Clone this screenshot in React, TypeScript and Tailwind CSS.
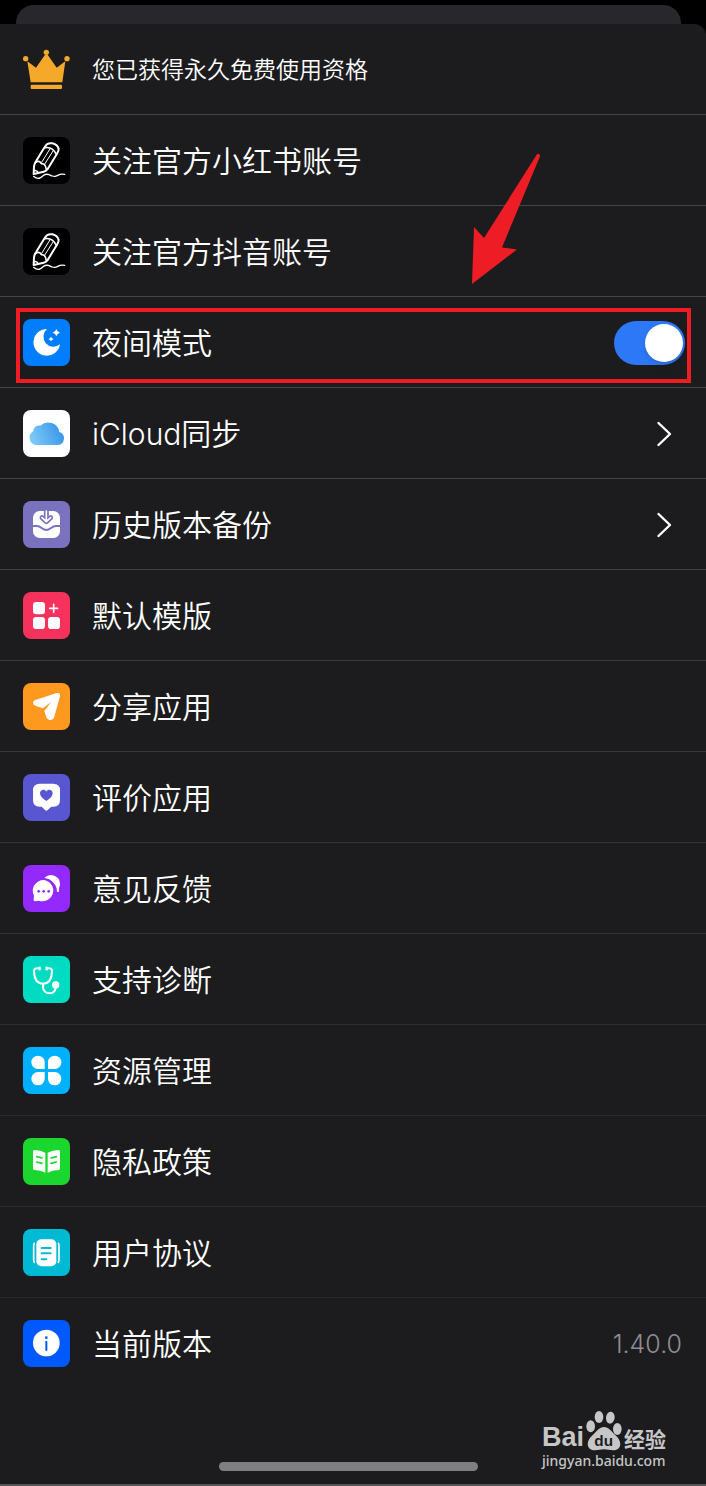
import { useState } from 'react';
import type { ReactNode } from 'react';

interface MenuItem {
  label: string;
  tile: string;
  divider: string;
  icon: ReactNode;
  chevron?: boolean;
}

const pencil = (
  <g fill="none" stroke="#fff" strokeLinecap="round" strokeLinejoin="round">
    <path strokeWidth="6" d="M32 111 L33 88 Q34 80 39 73 L65 30 Q73 16 88 19 Q104 23 107 36 Q107 42 102 50 L74 96 Q70 102 62 104 Z" />
    <path strokeWidth="5" d="M66 32 Q88 28 100 52" />
    <path strokeWidth="5" d="M37 77 Q48 68 55 80 Q67 78 70 98" />
    <path strokeWidth="3" d="M80 37 L56 76 M90 42 L66 80" />
    <path strokeWidth="4" d="M33 101 Q42 99 46 107" />
    <path strokeWidth="4" d="M32 118 C46 130 54 122 62 115 C72 107 80 114 88 117 C104 123 104 107 125 112" />
  </g>
);

const moon = (
  <g fill="#fff">
    <path d="M72 30 A40 40 0 1 0 111 76 A30 30 0 1 1 72 30 Z" />
    <path d="M100 30 Q102 39 111 41 Q102 43 100 52 Q98 43 89 41 Q98 39 100 30 Z" />
    <path d="M84 53 Q86 58 92 60 Q86 62 84 67 Q82 62 76 60 Q82 58 84 53 Z" />
  </g>
);

const cloud = (
  <>
    <defs>
      <linearGradient id="cloud" gradientUnits="userSpaceOnUse" x1="20" y1="90" x2="110" y2="50">
        <stop offset="0" stopColor="#82cdf9" />
        <stop offset="1" stopColor="#3a97e8" />
      </linearGradient>
    </defs>
    <path
      fill="url(#cloud)"
      d="M39 105 A22 22 0 0 1 31 64 A17 17 0 0 1 52 47 A34 34 0 0 1 109 66 A20 20 0 0 1 104 105 Z"
    />
  </>
);

const backup = (
  <>
    <rect x="30" y="30" width="81" height="81" rx="20" fill="#fff" />
    <g fill="none" stroke="#7b72bf" strokeLinecap="round" strokeLinejoin="round">
      <path strokeWidth="6" d="M28 75 H42 C54 75 58 87 70 87 C82 87 86 75 98 75 H113" />
      <path strokeWidth="15" d="M70 30 V60 M57 50 L70 62 L83 50" />
    </g>
    <path fill="none" stroke="#fff" strokeWidth="5" strokeLinecap="round" strokeLinejoin="round" d="M70 30 V61 M57 50 L70 62 L83 50" />
  </>
);

const templates = (
  <g fill="#fff">
    <rect x="30" y="30" width="36" height="37" rx="10" />
    <rect x="30" y="75" width="36" height="36" rx="10" />
    <rect x="75" y="75" width="36" height="36" rx="10" />
    <path stroke="#fff" strokeWidth="5" strokeLinecap="round" d="M92 37 V61 M80 49 H104" />
  </g>
);

const plane = (
  <path
    fill="#fff"
    d="M35 52 L101 30 Q113 28 111 40 L93 104 Q89 112 80 111 Q73 110 70 103 L64 84 L84 57 L60 76 L37 68 Q30 65 30 59 Q30 54 35 52 Z"
  />
);

const rating = (
  <>
    <path fill="#fff" d="M50 29 H91 Q111 29 111 49 V78 Q111 98 91 98 H85 L74 108 Q70 112 66 108 L56 98 H50 Q30 98 30 78 V49 Q30 29 50 29 Z" />
    <path fill="#5856d0" d="M70 81 C58 73 51 67 51 58 C51 46 66 44 70 53 C74 44 89 46 89 58 C89 67 82 73 70 81 Z" />
  </>
);

const chat = (
  <>
    <path fill="#fff" d="M64 39 A27 27 0 0 1 111 58 Q111 64 108 69 V78 Q107 82 102 80 A42 42 0 0 0 64 39 Z" />
    <path fill="#fff" d="M62 45 A33 32 0 1 1 47 107 L35 109 Q31 108 32 104 L33 92 A33 32 0 0 1 62 45 Z" />
    <g fill="#9429fb">
      <circle cx="47" cy="79" r="4" />
      <circle cx="62" cy="79" r="4" />
      <circle cx="77" cy="79" r="4" />
    </g>
  </>
);

const stethoscope = (
  <>
    <g fill="none" stroke="#fff" strokeWidth="6" strokeLinecap="round">
      <path d="M49 37 Q33 35 33 45 Q34 83 60 83 Q86 83 87 45 Q87 35 72 37" />
      <path d="M60 83 V93 Q61 112 80 112 Q98 111 98 92" />
      <path strokeWidth="7" d="M50 35 V40 M71 35 V40" />
    </g>
    <circle cx="98" cy="87" r="11" fill="#fff" />
  </>
);

const petals = (
  <g fill="#fff">
    <path d="M65 66 H45 A20 20 0 1 1 65 46 Z" />
    <path d="M75 66 V46 A20 20 0 1 1 95 66 Z" />
    <path d="M65 75 V95 A20 20 0 1 1 45 75 Z" />
    <path d="M75 75 H95 A20 20 0 1 1 75 95 Z" />
  </g>
);

const book = (
  <>
    <g fill="#fff">
      <path d="M34 36 Q52 36 67 44 V104 Q54 97 34 96 Q30 96 30 91 V41 Q30 36 34 36 Z" />
      <path d="M107 36 Q89 36 74 44 V104 Q87 97 107 96 Q111 96 111 91 V41 Q111 36 107 36 Z" />
    </g>
    <path fill="none" stroke="#1bd62e" strokeWidth="5" strokeLinecap="round" d="M41 56 L57 60 M41 72 L57 76 M100 56 L84 60 M100 72 L84 76" />
  </>
);

const agreement = (
  <>
    <rect x="40" y="31" width="60" height="81" rx="15" fill="#fff" />
    <path fill="none" stroke="#fff" strokeWidth="5" strokeLinecap="round" d="M34 43 Q32 46 32 52 V91 Q32 97 34 100 M106 43 Q108 46 108 52 V91 Q108 97 106 100" />
    <path fill="none" stroke="#00bad3" strokeWidth="6" strokeLinecap="round" d="M56 57 H83 M56 73 H83 M56 91 H70" />
  </>
);

const info = (
  <>
    <circle cx="70" cy="69" r="40" fill="#fff" />
    <circle cx="70" cy="53" r="4" fill="#0059ff" />
    <path stroke="#0059ff" strokeWidth="6" strokeLinecap="round" d="M70 65 V90" />
  </>
);

const accounts: MenuItem[] = [
  { label: '关注官方小红书账号', tile: 'bg-black', divider: 'border-[#454547]', icon: pencil },
  { label: '关注官方抖音账号', tile: 'bg-black', divider: 'border-[#454547]', icon: pencil },
];

const items: MenuItem[] = [
  { label: 'iCloud同步', tile: 'bg-white', divider: 'border-[#434345]', icon: cloud, chevron: true },
  { label: '历史版本备份', tile: 'bg-[#7b72bf]', divider: 'border-[#404042]', icon: backup, chevron: true },
  { label: '默认模版', tile: 'bg-[#f5325c]', divider: 'border-[#3b3b3d]', icon: templates },
  { label: '分享应用', tile: 'bg-[#fd991f]', divider: 'border-[#38383a]', icon: plane },
  { label: '评价应用', tile: 'bg-[#5856d0]', divider: 'border-[#343436]', icon: rating },
  { label: '意见反馈', tile: 'bg-[#9429fb]', divider: 'border-[#313133]', icon: chat },
  { label: '支持诊断', tile: 'bg-[#00dbc2]', divider: 'border-[#2e2e30]', icon: stethoscope },
  { label: '资源管理', tile: 'bg-[#00b0fb]', divider: 'border-[#2b2b2d]', icon: petals },
  { label: '隐私政策', tile: 'bg-[#1bd62e]', divider: 'border-[#29292b]', icon: book },
  { label: '用户协议', tile: 'bg-[#00bad3]', divider: 'border-[#28282a]', icon: agreement },
];

const rowClass = 'flex h-[91px] w-full items-center gap-[22px] border-b pt-px pr-[21px] pl-[23px] text-left';

function Tile({ className, children }: { className: string; children: ReactNode }) {
  return (
    <span className={`size-[47px] shrink-0 overflow-hidden rounded-lg ${className}`}>
      <svg className="block size-full" viewBox="0 0 141 141" aria-hidden="true">
        {children}
      </svg>
    </span>
  );
}

function MenuRow({ item }: { item: MenuItem }) {
  return (
    <li>
      <button type="button" className={`${rowClass} ${item.divider}`}>
        <Tile className={item.tile}>{item.icon}</Tile>
        <span className="flex-1">{item.label}</span>
        {item.chevron && (
          <svg className="mr-[13px] h-7 w-4" viewBox="0 0 16 28" fill="none" stroke="#fff" strokeWidth="2.4" strokeLinecap="round" strokeLinejoin="round" aria-hidden="true">
            <path d="M2.5 3 L14 14 L2.5 25" />
          </svg>
        )}
      </button>
    </li>
  );
}

function NightModeRow() {
  const [on, setOn] = useState(true);

  return (
    <li className="relative">
      <label className={`${rowClass} border-[#454547]`}>
        <Tile className="bg-[#007efe]">{moon}</Tile>
        <span className="flex-1">夜间模式</span>
        <input type="checkbox" role="switch" className="peer sr-only" checked={on} onChange={e => setOn(e.target.checked)} />
        <span className="flex h-11 w-[71px] items-center rounded-full bg-[#39393d] px-[2px] peer-checked:justify-end peer-checked:bg-[#2d78f6]">
          <span className="size-[38px] rounded-full bg-white shadow-md" />
        </span>
      </label>

      {/* callout over the row */}
      <div className="pointer-events-none absolute top-[11px] right-[15px] bottom-[5px] left-4 border-4 border-[#ee1c24]" />
      <svg className="pointer-events-none absolute right-[166px] bottom-[104px] h-[131px] w-[68px]" viewBox="0 0 68 131" fill="#ee1c24" aria-hidden="true">
        <path d="M0 131 L2 74 L12 85 L64.5 2 Q66 0 67.5 1.5 Q68.5 2 67.5 4.5 L30 94.5 L45 96.5 Z" />
      </svg>
    </li>
  );
}

function Watermark() {
  return (
    <div className="absolute right-10 bottom-[13px] text-[#c6c6c6]">
      <div className="flex items-end gap-[2px]">
        <span className="font-['Liberation_Sans',sans-serif] text-[27px] leading-[28px] font-bold">Bai</span>
        <svg className="h-10 w-9" viewBox="0 0 108 120" fill="currentColor" aria-hidden="true">
          <ellipse cx="14" cy="46" rx="13" ry="18" />
          <ellipse cx="39" cy="18" rx="13" ry="18" />
          <ellipse cx="73" cy="20" rx="13" ry="18" transform="rotate(8 73 20)" />
          <ellipse cx="94" cy="54" rx="13" ry="18" />
          <path d="M54 48 C68 48 74 60 90 74 C110 92 106 118 82 118 C70 118 64 115 54 115 C44 115 38 118 26 118 C2 118 -2 92 18 74 C34 60 40 48 54 48 Z" />
          <text x="53" y="104" textAnchor="middle" fill="#1c1c1e" fontFamily="Liberation Sans, sans-serif" fontWeight="700" fontSize="46">du</text>
        </svg>
        <span className="text-[21px] leading-[23px] font-bold">经验</span>
      </div>
      <p className="font-['Noto_Sans',sans-serif] text-sm leading-5 font-medium">jingyan.baidu.com</p>
    </div>
  );
}

export default function App() {
  return (
    <div className="flex min-h-screen flex-col bg-black pt-[5px] font-['Inter','Noto_Sans_CJK_SC',sans-serif] text-[30px] leading-10 font-[350] text-white">
      <div className="mr-[25px] ml-4 h-[19px] rounded-t-[18px] bg-[#28272c]" />

      <main className="relative flex flex-1 flex-col rounded-tr-xl border-b-2 border-[#555557] bg-[#1c1c1e]">
        <ul>
          <li className={`${rowClass} border-[#454547]`}>
            <Tile className="">
              <g fill="#f5a92b">
                <circle cx="70" cy="19" r="8" />
                <circle cx="8" cy="38" r="8" />
                <circle cx="132" cy="38" r="8" />
                <path d="M13 46 L39 65 L66 26 H74 L101 65 L127 46 L118 109 H23 Z" />
                <rect x="23" y="116" width="94" height="13" rx="3" />
              </g>
            </Tile>
            <span className="text-[23px]">您已获得永久免费使用资格</span>
          </li>
          {accounts.map(item => (
            <MenuRow key={item.label} item={item} />
          ))}
          <NightModeRow />
          {items.map(item => (
            <MenuRow key={item.label} item={item} />
          ))}
          <li className={`${rowClass} border-transparent`}>
            <Tile className="bg-[#0059ff]">{info}</Tile>
            <span className="flex-1">当前版本</span>
            <span className="mr-[3px] text-[25px] text-[#8e8e93]">1.40.0</span>
          </li>
        </ul>

        <footer className="mt-auto flex justify-center pt-[72px] pr-2.5 pb-[13px]">
          <div className="h-[9px] w-[259px] rounded-full bg-[#7f7f81]" />
        </footer>
        <Watermark />
      </main>
    </div>
  );
}
